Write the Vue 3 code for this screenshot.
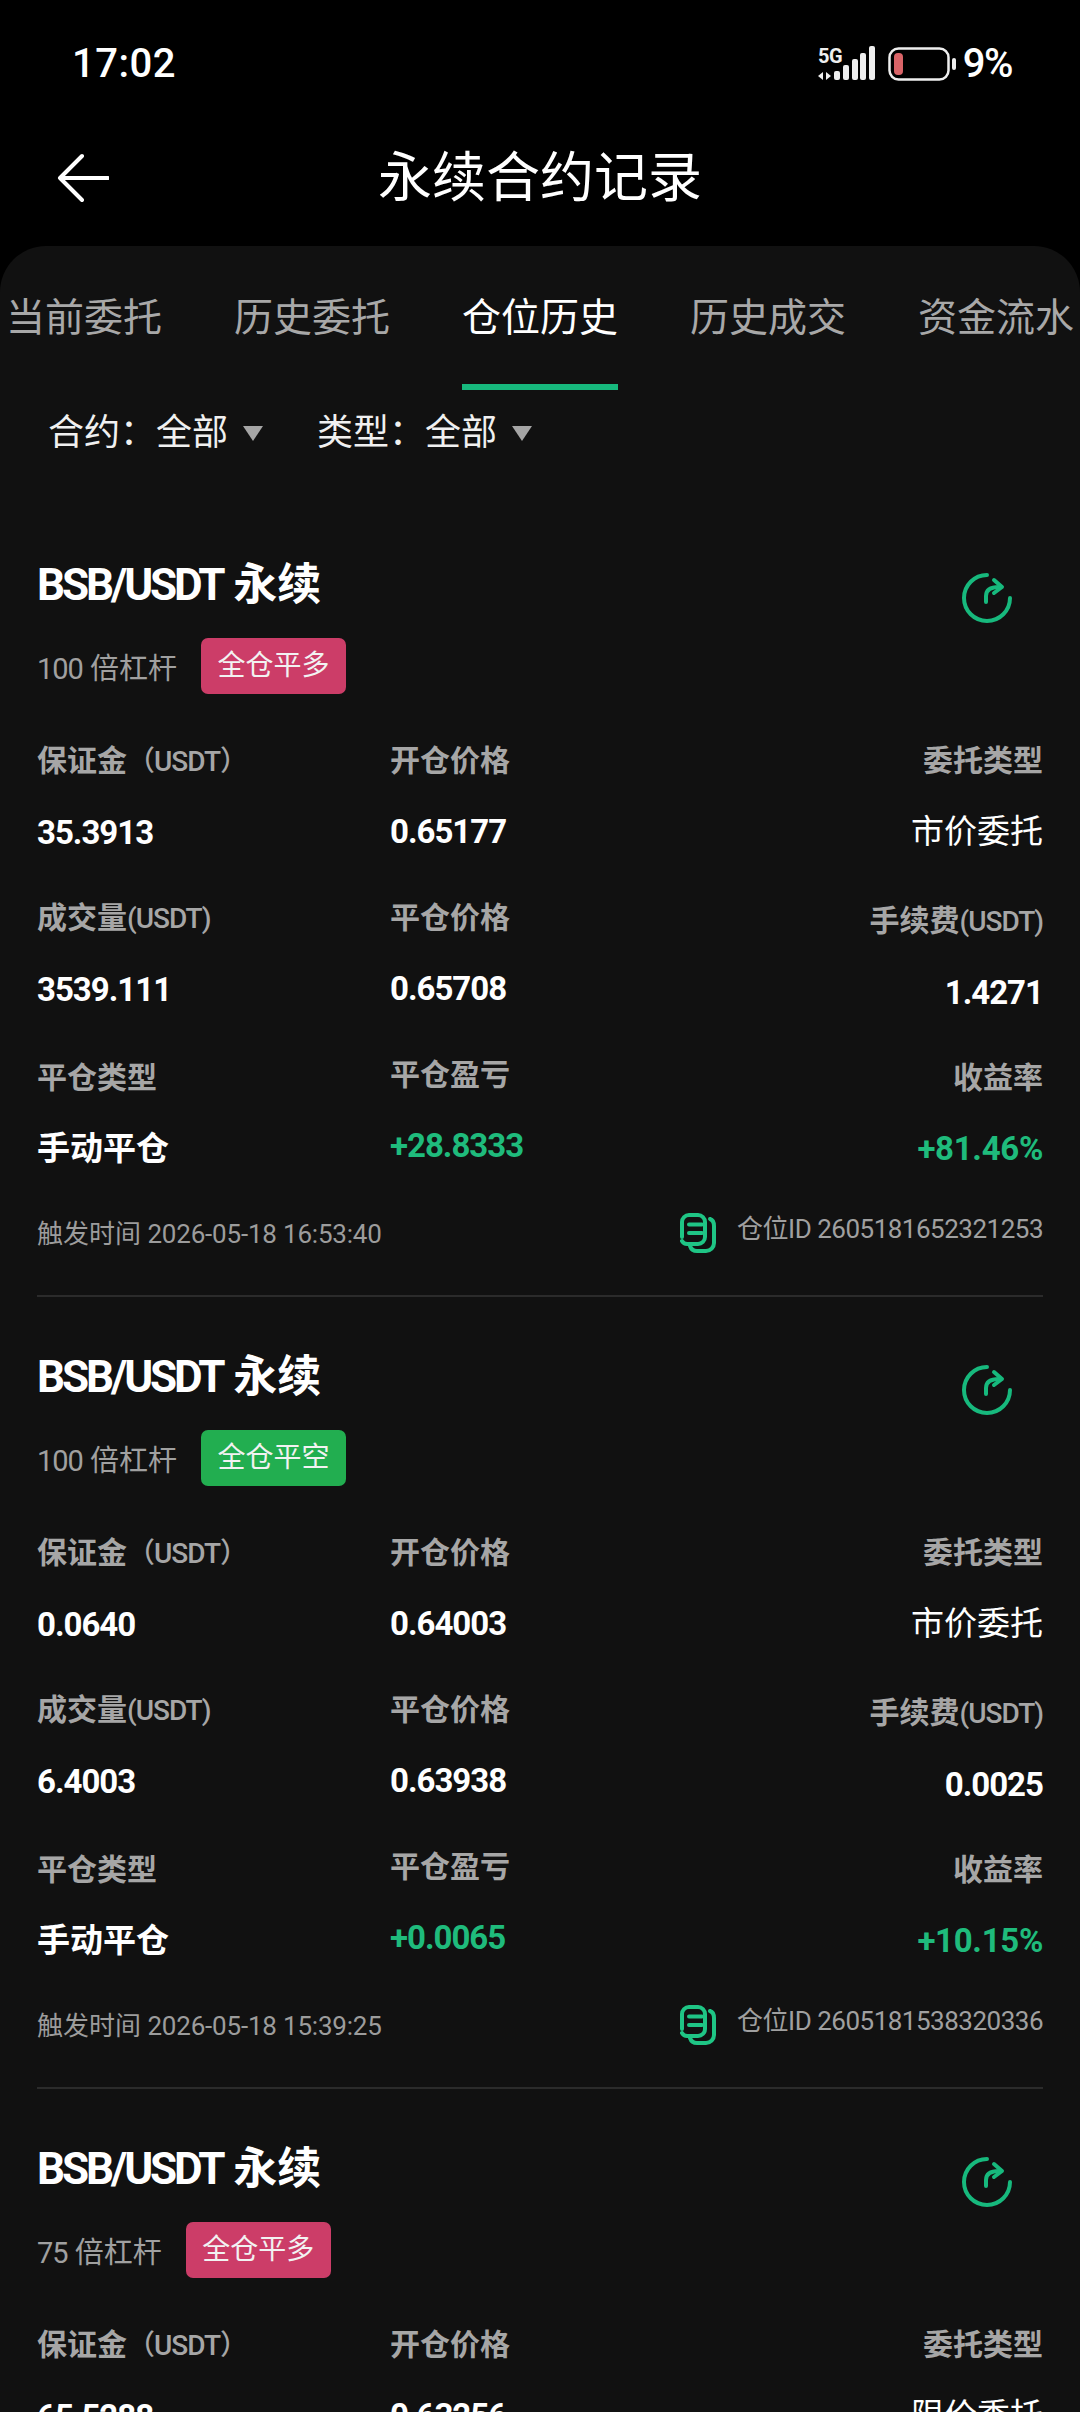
<script setup>
const tabs = ['当前委托', '历史委托', '仓位历史', '历史成交', '资金流水']
const filters = [
  { label: '合约：', value: '全部' },
  { label: '类型：', value: '全部' }
]
const cards = [
  {
    lev: '100', tag: '全仓平多', side: 'long',
    margin: '35.3913', open: '0.65177', type: '市价委托',
    vol: '3539.111', close: '0.65708', fee: '1.4271',
    pnl: '+28.8333', rate: '+81.46%',
    time: '2026-05-18 16:53:40', id: '2605181652321253'
  },
  {
    lev: '100', tag: '全仓平空', side: 'short',
    margin: '0.0640', open: '0.64003', type: '市价委托',
    vol: '6.4003', close: '0.63938', fee: '0.0025',
    pnl: '+0.0065', rate: '+10.15%',
    time: '2026-05-18 15:39:25', id: '2605181538320336'
  },
  {
    lev: '75', tag: '全仓平多', side: 'long',
    margin: '65.5288', open: '0.63256', type: '限价委托',
    vol: '', close: '', fee: '', pnl: '', rate: '', time: '', id: ''
  }
]
</script>

<template>
  <div class="page">
    <div class="status">
      <span class="clock">17:02</span>
      <div class="status-right">
        <svg class="signal" width="60" height="36" viewBox="0 0 60 36">
          <text x="1" y="17" class="five-g">5G</text>
          <path d="M6 26v8l-5-4zM9 26v8l5-4z" fill="#eee" />
          <rect x="17" y="25" width="6" height="9" rx="2" fill="#eee" />
          <rect x="26" y="19" width="6" height="15" rx="2" fill="#eee" />
          <rect x="35" y="13" width="6" height="21" rx="2" fill="#eee" />
          <rect x="43" y="7" width="6" height="27" rx="2" fill="#eee" />
          <rect x="52" y="0" width="6" height="34" rx="2" fill="#eee" />
        </svg>
        <svg class="battery" width="69" height="34" viewBox="0 0 69 34">
          <rect x="1.500" y="1.500" width="59" height="31" rx="9" fill="none" stroke="#eee" stroke-width="2.500" />
          <rect x="6" y="6" width="9" height="22" rx="4" fill="#d96468" />
          <rect x="64" y="11" width="4" height="12" rx="2" fill="#eee" />
        </svg>
        <span class="percent">9%</span>
      </div>
    </div>

    <header class="nav">
      <svg class="back" width="52" height="50" viewBox="0 0 52 50">
        <path d="M25 3 3 25l22 22M3 25h48" fill="none" stroke="#fff" stroke-width="4" stroke-linecap="round" stroke-linejoin="round" />
      </svg>
      <h1 class="title">永续合约记录</h1>
    </header>

    <main class="panel">
      <div class="tabs">
        <div v-for="(t, i) in tabs" :key="t" class="tab" :class="{ active: i === 2 }">{{ t }}</div>
      </div>

      <div class="filters">
        <div v-for="f in filters" :key="f.label" class="filter">
          <span>{{ f.label }}</span><span>{{ f.value }}</span><i class="caret"></i>
        </div>
      </div>

      <section v-for="c in cards" :key="c.margin" class="card">
        <div class="card-head">
          <div>
            <div class="pair"><span class="pair-latin">BSB/USDT</span> 永续</div>
            <div class="sub">
              <span class="lev"><span class="lev-num">{{ c.lev }}</span> 倍杠杆</span>
              <span class="tag" :class="c.side">{{ c.tag }}</span>
            </div>
          </div>
          <svg class="share" width="52" height="52" viewBox="0 0 52 52">
            <g fill="none" stroke="#17b97d" stroke-width="4" stroke-linecap="round" stroke-linejoin="round">
              <path d="M26 3A23 23 0 1 0 49 26" />
              <path d="M25 30v-6c0-6 5-9 13-9" />
              <path d="M33 8l8 7-8 6" />
            </g>
          </svg>
        </div>

        <div class="grid">
          <div class="col col-1">
            <div class="cell">
              <div class="lab">保证金<span class="thin">（USDT）</span></div>
              <div class="val">{{ c.margin }}</div>
            </div>
            <div class="cell tall">
              <div class="lab">成交量<span class="thin">(USDT)</span></div>
              <div class="val">{{ c.vol }}</div>
            </div>
            <div class="cell">
              <div class="lab">平仓类型</div>
              <div class="val cn">手动平仓</div>
            </div>
          </div>
          <div class="col col-2">
            <div class="cell">
              <div class="lab">开仓价格</div>
              <div class="val">{{ c.open }}</div>
            </div>
            <div class="cell">
              <div class="lab">平仓价格</div>
              <div class="val">{{ c.close }}</div>
            </div>
            <div class="cell">
              <div class="lab">平仓盈亏</div>
              <div class="val green">{{ c.pnl }}</div>
            </div>
          </div>
          <div class="col col-3">
            <div class="cell tall">
              <div class="lab">委托类型</div>
              <div class="val cn-light">{{ c.type }}</div>
            </div>
            <div class="cell">
              <div class="lab">手续费<span class="thin">(USDT)</span></div>
              <div class="val">{{ c.fee }}</div>
            </div>
            <div class="cell">
              <div class="lab">收益率</div>
              <div class="val green rate">{{ c.rate }}</div>
            </div>
          </div>
        </div>

        <div class="foot">
          <span class="time">触发时间 <span class="time-num">{{ c.time }}</span></span>
          <div class="pos">
            <svg class="copy" width="36" height="40" viewBox="0 0 36 40">
              <g fill="none" stroke="#1fc585" stroke-width="4" stroke-linecap="round" stroke-linejoin="round">
                <path d="M2 24V9a7 7 0 0 1 7-7h9a7 7 0 0 1 7 7v15a7 7 0 0 1-7 7H8a6 6 0 0 1-6-3" />
                <path d="M9 11.500h13M9 20h13" />
                <path d="M30 6c3 1 4 4 4 7v17a8 8 0 0 1-8 8H17c-3 0-6-2-7-5" />
              </g>
            </svg>
            <span class="pos-id">仓位ID {{ c.id }}</span>
          </div>
        </div>
      </section>
    </main>
  </div>
</template>

<style>
html, body { margin: 0; background: #000; overflow: hidden; }
</style>

<style scoped>
.page {
  width: 1080px;
  height: 2412px;
  overflow: hidden;
  background: #000;
  color: #fff;
  font-family: "Roboto", "Noto Sans CJK SC", sans-serif;
}
.status {
  height: 124px;
  box-sizing: border-box;
  padding: 42px 68px 0 72px;
  display: flex;
  justify-content: space-between;
  align-items: flex-start;
}
.clock { font-size: 40px; line-height: 44px; font-weight: 500; letter-spacing: 0.500px; }
.status-right { display: flex; align-items: center; margin-top: 2px; }
.signal { margin-right: 11px; overflow: visible; }
.five-g { font: 700 20px "Roboto", sans-serif; fill: #eee; letter-spacing: -0.500px; }
.battery { margin-right: 6px; }
.percent { font-size: 40px; line-height: 40px; font-weight: 500; letter-spacing: -1.500px; }
.nav {
  height: 122px;
  display: grid;
  grid-template-columns: 1fr auto 1fr;
  align-items: start;
}
.back { margin: 29px 0 0 57px; }
.title {
  margin: 0;
  font-size: 54px;
  font-weight: 400;
  line-height: 110px;
}
.panel {
  background: #111;
  border-radius: 46px 46px 0 0;
  padding-bottom: 200px;
}
.tabs {
  display: flex;
  justify-content: center;
  gap: 72px;
  height: 144px;
}
.tab {
  width: 156px;
  box-sizing: border-box;
  text-align: center;
  font-size: 39px;
  line-height: 46px;
  padding-top: 49px;
  color: #a8a8a8;
  white-space: nowrap;
}
.tab.active {
  color: #fff;
  border-bottom: 6px solid #17b97d;
}
.filters {
  display: flex;
  gap: 54px;
  padding: 21px 0 0 48px;
  height: 115px;
  box-sizing: border-box;
}
.filter {
  display: flex;
  align-items: center;
  font-size: 36px;
  line-height: 44px;
  height: 44px;
  color: #f0f0f0;
}
.caret {
  display: block;
  width: 0;
  height: 0;
  margin-left: 15px;
  border-left: 10px solid transparent;
  border-right: 10px solid transparent;
  border-top: 15px solid #a5a5a5;
}
.card {
  margin: 0 37px;
  height: 792px;
  box-sizing: border-box;
  border-bottom: 2px solid #2b2b2b;
}
.card-head {
  height: 236px;
  box-sizing: border-box;
  padding-top: 39px;
  display: flex;
  justify-content: space-between;
}
.pair {
  font-size: 44px;
  line-height: 58px;
  font-weight: 700;
  margin-top: 12px;
}
.pair-latin { letter-spacing: -3.100px; }
.sub { display: flex; align-items: center; margin-top: 24px; }
.lev { font-size: 29px; color: #a0a0a0; margin-right: 24px; }
.lev-num { letter-spacing: -1px; }
.tag {
  width: 145px;
  height: 56px;
  border-radius: 7px;
  font-size: 28px;
  line-height: 56px;
  text-align: center;
  color: #f2f2f2;
}
.tag.long { background: #cc3d68; }
.tag.short { background: #22ae50; }
.share { margin-top: 28px; margin-right: 30px; }
.grid { display: flex; height: 452px; }
.col-1 { width: 353px; }
.col-2 { flex: 1; }
.col-3 { text-align: right; }
.cell { height: 157px; }
.cell.tall { height: 160px; }
.lab {
  font-size: 30px;
  line-height: 40px;
  font-weight: 700;
  color: #a6a6a6;
}
.thin { font-weight: 500; font-size: 28px; letter-spacing: -1px; }
.val {
  margin-top: 31px;
  font-size: 33px;
  line-height: 40px;
  font-weight: 700;
  color: #fff;
  letter-spacing: -1px;
}
.val.cn { letter-spacing: 0; }
.val.cn-light { font-weight: 400; letter-spacing: 0; }
.val.green { color: #1fbb7c; }
.val.rate { letter-spacing: -0.300px; }
.foot {
  display: flex;
  justify-content: space-between;
  align-items: center;
  height: 80px;
}
.time { font-size: 26px; color: #9c9c9c; margin-top: -4px; }
.time-num { letter-spacing: -0.200px; }
.pos { display: flex; align-items: center; }
.copy { margin-right: 21px; }
.pos-id { font-size: 26px; color: #a0a0a0; margin-top: -14px; letter-spacing: -0.500px; }
</style>
